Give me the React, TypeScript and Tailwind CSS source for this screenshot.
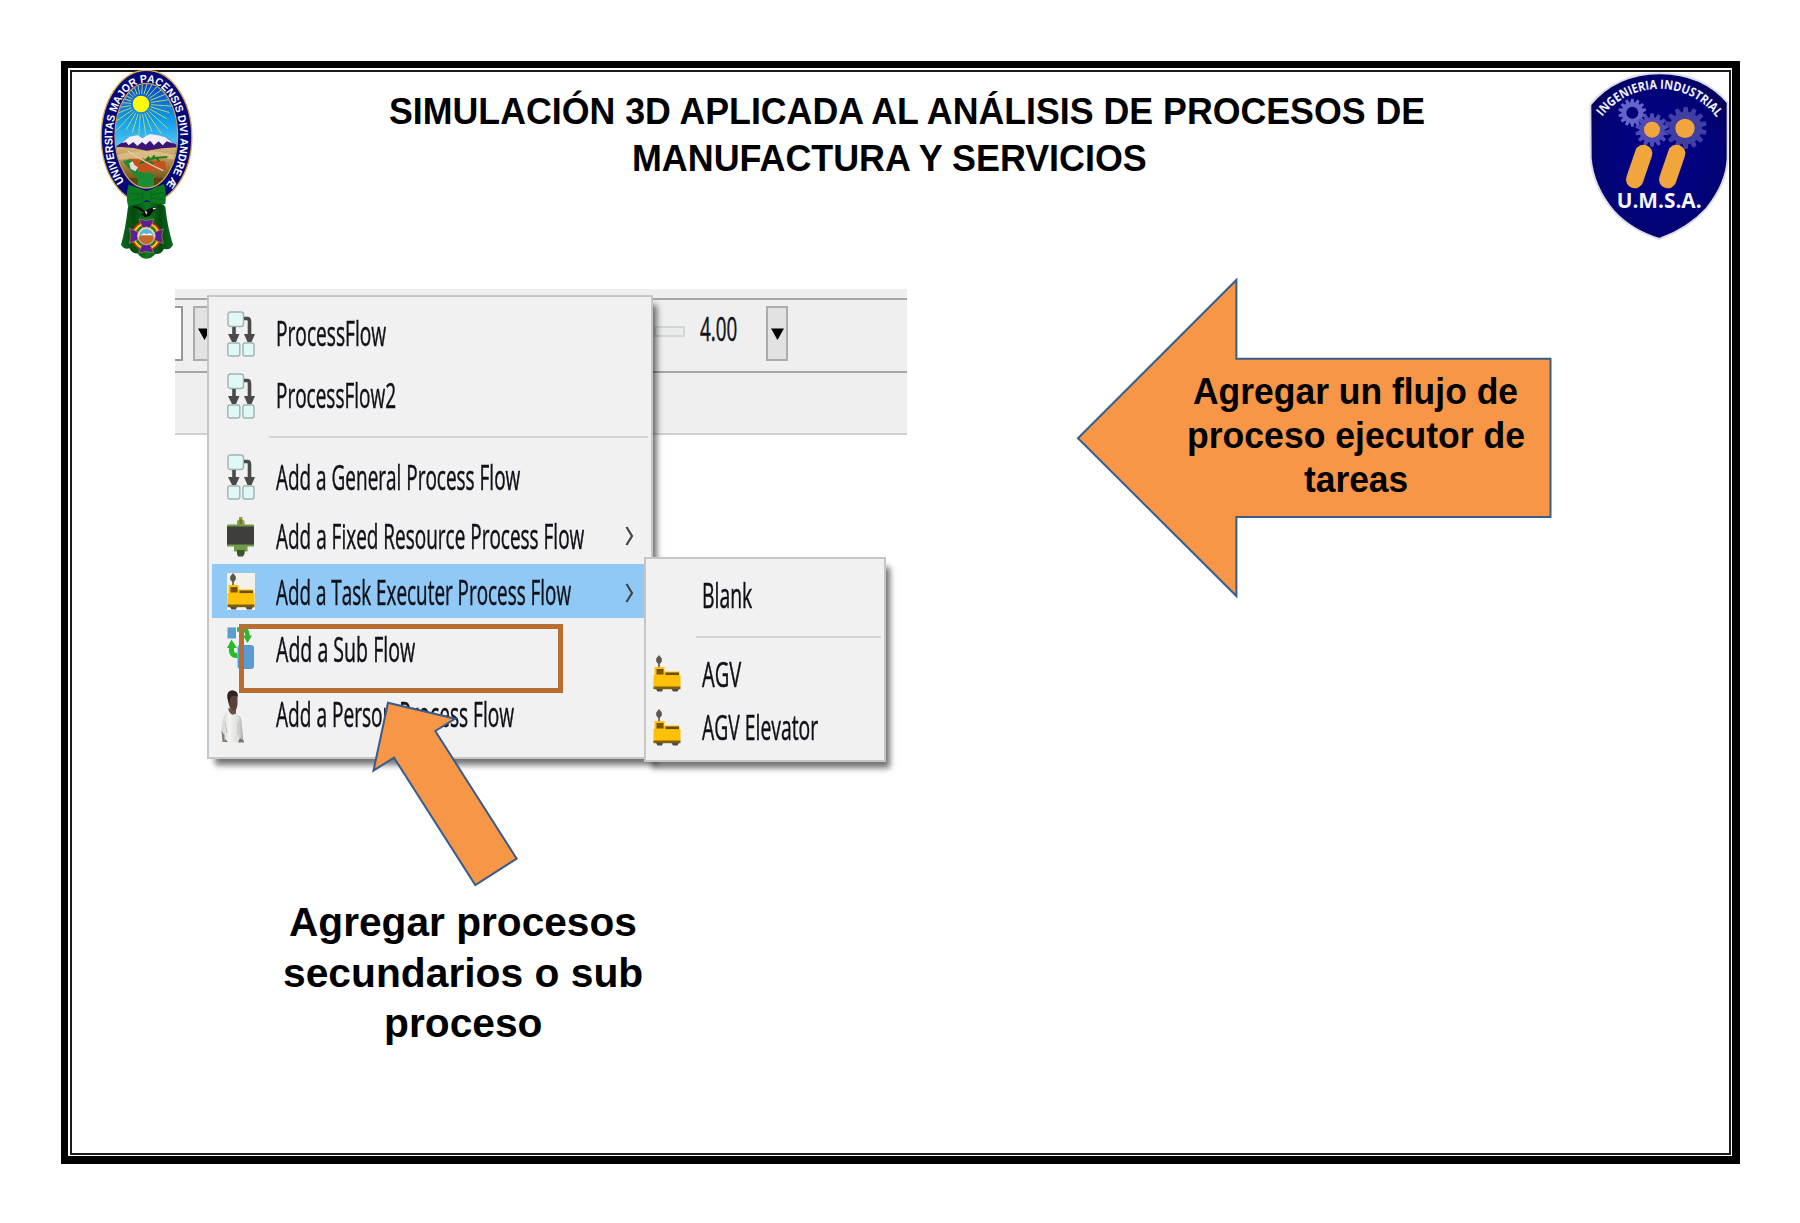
import { useLayoutEffect, useRef, useState } from "react";
import type { ReactNode } from "react";

/* One line of text, condensed or widened so that it spans `width` pixels. */
function FitLine({ width, className = "", children }: { width: number; className?: string; children: ReactNode }) {
  const ref = useRef<HTMLSpanElement>(null);
  const [scale, setScale] = useState(1);
  useLayoutEffect(() => {
    if (ref.current) setScale(width / ref.current.offsetWidth);
  }, [width]);
  return (
    <span className={`block ${className}`} style={{ width }}>
      <span ref={ref} className="inline-block origin-left whitespace-nowrap" style={{ transform: `scaleX(${scale})` }}>
        {children}
      </span>
    </span>
  );
}

const rayAngles = Array.from({ length: 28 }, (_, i) => (i * 360) / 28 + 4);

function UniversitySeal() {
  return (
    <svg className="-mt-[2px] ml-7 h-[191px] w-[94px] shrink-0" viewBox="150 60 282 573">
      <defs>
        <linearGradient id="sky" x1="0" y1="0" x2="0" y2="1">
          <stop offset="0" stopColor="#0a3fc4" />
          <stop offset="0.6" stopColor="#12a0ea" />
          <stop offset="1" stopColor="#5cc8f4" />
        </linearGradient>
        <linearGradient id="land" x1="0" y1="0" x2="0" y2="1">
          <stop offset="0" stopColor="#d8b878" />
          <stop offset="0.35" stopColor="#b08a48" />
          <stop offset="0.7" stopColor="#7a5a1c" />
          <stop offset="1" stopColor="#5a3c0c" />
        </linearGradient>
        <linearGradient id="ribbon" x1="0" y1="0" x2="1" y2="0">
          <stop offset="0" stopColor="#0b6a1c" />
          <stop offset="0.25" stopColor="#044a10" />
          <stop offset="0.5" stopColor="#0b7a20" />
          <stop offset="0.75" stopColor="#044a10" />
          <stop offset="1" stopColor="#0b6a1c" />
        </linearGradient>
        <clipPath id="sealInner">
          <ellipse cx="289" cy="257" rx="93" ry="156" />
        </clipPath>
        <path id="sealText" d="M223 395 A102 169 0 1 1 355 395" />
      </defs>
      <ellipse cx="289.5" cy="260" rx="136" ry="199" fill="#04087a" stroke="#d9a648" strokeWidth="4" />
      <g clipPath="url(#sealInner)">
        <rect x="190" y="95" width="200" height="200" fill="url(#sky)" />
        <g stroke="#b4dc74" strokeWidth="2.6">
          {rayAngles.map((a) => (
            <path key={a} d={a % 3 < 1.5 ? "M303 162 H382" : "M303 162 H362"} transform={`rotate(${a} 273 162)`} />
          ))}
        </g>
        <circle cx="273" cy="162" r="25" fill="#fdfb0a" />
        <path d="M190 295 L218 276 L238 262 L262 258 L276 264 L300 254 L322 258 L345 262 L366 276 L392 292 V306 H190Z" fill="#3b1478" />
        <path d="M214 280 L238 260 L262 256 L277 264 L300 252 L324 256 L346 262 L372 281 L350 274 L338 286 L326 274 L312 286 L300 272 L287 284 L276 276 L262 288 L250 276 L236 286 L228 276Z" fill="#f4effa" />
        <path d="M190 292 Q240 288 290 302 Q340 292 392 292 V420 H190Z" fill="url(#land)" />
        <path d="M200 315 Q290 290 384 318 V330 Q290 318 200 330Z" fill="#e2c892" opacity="0.7" />
        <path d="M235 326 L345 334 L350 358 L270 366Z" fill="#c4521c" />
        <path d="M218 334 L240 328 L268 366 L312 372 L312 412 L262 412 L264 388Z" fill="#1b8c34" />
        <path d="M270 340 Q310 318 352 322 M288 330 l10 -10 M304 328 l10 -12 M320 326 l8 8 M300 334 l10 8" stroke="#1f7a1d" strokeWidth="6" fill="none" />
        <path d="M234 303 Q290 340 340 362" stroke="#d8cfc0" strokeWidth="4" fill="none" />
        <path d="M238 340 l10 -6 l6 12 l10 6 l-8 12 l-14 -8z" fill="#e0ddd8" />
        <path d="M190 384 H262 V430 H190Z M312 384 H392 V430 H312Z" fill="#5e430e" />
      </g>
      <ellipse cx="289" cy="257" rx="94" ry="157" fill="none" stroke="#c9a060" strokeWidth="4" />
      <text fill="#fff" fontFamily="'Liberation Sans', sans-serif" fontWeight="700" fontSize="33" textLength="716" lengthAdjust="spacingAndGlyphs">
        <textPath href="#sealText">UNIVERSITAS MAJOR PACENSIS DIVI ANDRE Æ</textPath>
      </text>
      <path d="M246 456 L234 470 Q226 540 213 584 Q222 600 238 595 Q246 612 262 610 Q288 642 316 612 Q334 614 342 596 Q360 602 369 584 Q352 530 346 470 L332 456Z" fill="url(#ribbon)" />
      <path d="M236 404 Q262 412 290 424 Q318 410 342 402 Q350 430 346 462 Q320 466 290 450 Q262 466 234 468 Q226 434 236 404Z" fill="#0b7a20" />
      <path d="M240 430 L278 434 M242 452 L276 444 M342 428 L304 434 M342 450 L304 444 M278 424 V450 M303 424 V450" stroke="#066016" strokeWidth="2" />
      <path d="M248 470 Q270 468 285 484 Q300 470 326 472 Q308 482 300 498 L284 502 Q280 494 270 494 L282 488 Q266 476 248 470Z" fill="#0c0c0c" />
      <path d="M284 482 l8 4 -3 8z M308 474 l14 -1 -12 6z" fill="#eee" />
      <circle cx="289" cy="558" r="38" fill="none" stroke="#e02018" strokeWidth="14" />
      <circle cx="289" cy="558" r="37" fill="none" stroke="#f6d617" strokeWidth="6" />
      <circle cx="289" cy="558" r="32" fill="none" stroke="#188a28" strokeWidth="4" />
      {[0, 90, 180, 270].map((a) => (
        <path key={a} d="M279 536 L267 507 Q289 516 312 507 L300 536Z" transform={`rotate(${a} 289 558)`} fill="#5a1f98" stroke="#b88a40" strokeWidth="2" />
      ))}
      <circle cx="289" cy="558" r="27" fill="#e9d9b0" stroke="#b89858" strokeWidth="2" />
      <path d="M268 558 A21 21 0 0 1 310 558Z" fill="#54b8e0" />
      <path d="M266 560 Q289 546 312 560 A23 23 0 0 1 266 560Z" fill="#c06a30" />
      <path d="M272 556 l10 -6 8 3 10 -4 8 7z" fill="#fff" />
    </svg>
  );
}

function Gear({ cx, cy, r, teeth, fill }: { cx: number; cy: number; r: number; teeth: number; fill: string }) {
  const angles = Array.from({ length: teeth }, (_, i) => (i * 360) / teeth);
  const w = (r * 2.7) / teeth;
  return (
    <g fill={fill}>
      <circle cx={cx} cy={cy} r={r * 0.77} />
      {angles.map((a) => (
        <path
          key={a}
          d={`M${cx - w * 0.72} ${cy - r * 0.7} L${cx - w * 0.5} ${cy - r} H${cx + w * 0.5} L${cx + w * 0.72} ${cy - r * 0.7}Z`}
          transform={`rotate(${a} ${cx} ${cy})`}
        />
      ))}
    </g>
  );
}

function FacultyShield() {
  return (
    <svg className="h-[168px] w-[141px] shrink-0" viewBox="84 66 423 504">
      <defs>
        <radialGradient id="navy" cx="0.5" cy="0.5" r="0.6">
          <stop offset="0" stopColor="#02028c" />
          <stop offset="0.75" stopColor="#020275" />
          <stop offset="1" stopColor="#03034f" />
        </radialGradient>
        <path id="shieldText" d="M127 200 A216 216 0 0 1 474 208" />
      </defs>
      <path
        d="M91 164 Q168 71 300 70 Q428 71 503 158 V325 Q500 400 440 475 Q385 535 298 567 Q212 540 160 482 Q100 410 92 325Z"
        fill="url(#navy)"
        stroke="#dcdcec"
        strokeWidth="6"
      />
      <Gear cx={217} cy={188} r={42} teeth={14} fill="#6464cc" />
      <circle cx="217" cy="188" r="18" fill="#020276" />
      <Gear cx={276} cy={240} r={50} teeth={14} fill="#4f4bb4" />
      <Gear cx={377} cy={234} r={63} teeth={14} fill="#403ea2" />
      <g fill="#f0a63c">
        <circle cx="276" cy="239" r="24" />
        <circle cx="375" cy="235" r="29" />
      </g>
      <path d="M251 310 L224 389 M350 310 L323 389" stroke="#f0a63c" strokeWidth="52" strokeLinecap="round" />
      <text fill="#f4f4fc" fontFamily="'Open Sans', sans-serif" fontWeight="700" fontSize="38" textLength="396" lengthAdjust="spacingAndGlyphs">
        <textPath href="#shieldText">INGENIERIA INDUSTRIAL</textPath>
      </text>
      <text x="170" y="473" fill="#f4f4fc" fontFamily="'Open Sans', sans-serif" fontWeight="700" fontSize="66" textLength="255" lengthAdjust="spacingAndGlyphs">
        U.M.S.A.
      </text>
    </svg>
  );
}

function FlowIcon() {
  return (
    <svg className="ml-[15px] mt-[3px] h-[46px] w-[28px]" viewBox="0 0 28 46">
      <g fill="#e2f8f6" stroke="#9fb4b2" strokeWidth="1.4">
        <rect x="1" y="1" width="15.5" height="14.5" rx="2.5" />
        <rect x="0.8" y="32" width="12" height="13" rx="2" />
        <rect x="16" y="32" width="11" height="13" rx="2" />
      </g>
      <path d="M7 16 V26 M17 7.500 H20.5 Q22.500 7.500 22.500 11 V26" fill="none" stroke="#4a4a4a" strokeWidth="3.6" />
      <path d="M1 23 H12.500 L9 31 H5Z M17 23 H28 L24.500 31 H20.500Z" fill="#4a4a4a" />
    </svg>
  );
}

function FixedResourceIcon() {
  return (
    <svg className="ml-[15px] mt-1 h-[41px] w-[28px]" viewBox="0 0 28 41">
      <path d="M10 9 V5 L12 3.500 V1 H15.500 V3.500 L17.500 5 V9Z" fill="#8ea040" />
      <rect x="12.500" y="3.500" width="2.500" height="4.500" fill="#8a6a2c" />
      <rect x="0" y="8.500" width="27" height="3" rx="1" fill="#6f9a44" />
      <rect x="0" y="10.500" width="27" height="18.500" fill="#3e3e3c" />
      <path d="M0 28.500 H27 V30.500 H20.500 V35.500 H17.500 V37 H10 V35.500 H7 V30.500 H0Z" fill="#6f9a4a" />
      <path d="M10 34 H17.500 V38 L16 40.500 H11 L10 38Z" fill="#3c5230" />
    </svg>
  );
}

function AgvIcon({ className = "" }: { className?: string }) {
  return (
    <svg className={`h-[37px] w-[28px] ${className}`} viewBox="0 0 28 37">
      <path d="M6 0 L8.800 3.500 V6.500 L6.800 9 V12 H5.200 V9 L3.200 6.500 V3.500Z" fill="#5c5850" />
      <path d="M1.500 12 H11.500 V16.500 H26.500 V20 H27.500 V32 H0.500 V20 H1.500Z" fill="#ffc107" />
      <rect x="3.500" y="14" width="7" height="5.500" fill="#7a5200" />
      <rect x="12.500" y="17.500" width="13.500" height="2.600" fill="#6a5010" />
      <rect x="0.500" y="31.500" width="27" height="2.700" fill="#7c6008" />
      <path d="M3 34 H10 L9 36.500 H4.500Z M18.500 34 H26 L24.500 36.500 H20Z" fill="#4c4c4c" />
    </svg>
  );
}

function SubFlowIcon() {
  return (
    <svg className="ml-[15px] mt-[3px] h-[43px] w-[28px]" viewBox="0 0 28 43">
      <path d="M10 2.500 H16 Q20.500 2.500 20.500 9" fill="none" stroke="#2fb52c" strokeWidth="4.5" />
      <path d="M16 8.500 H25 L20.500 16Z" fill="#2fb52c" />
      <path d="M4.500 19 V24 Q5 29 10.500 28.500" fill="none" stroke="#27bd25" strokeWidth="5" />
      <path d="M0 21 L4.500 12.500 L10 21Z" fill="#27bd25" />
      <rect x="0.500" y="0.500" width="8.500" height="11" fill="#5b9bd0" />
      <rect x="10.500" y="18" width="16.500" height="24" rx="3" fill="#5b9bd5" />
    </svg>
  );
}

function PersonIcon() {
  return (
    <svg className="ml-[9px] mt-[9px] h-[53px] w-[24px]" viewBox="0 0 24 53">
      <defs>
        <linearGradient id="shirt" x1="0" y1="0" x2="1" y2="0">
          <stop offset="0" stopColor="#cfcfcd" />
          <stop offset="0.35" stopColor="#f4f4f2" />
          <stop offset="0.75" stopColor="#dededc" />
          <stop offset="1" stopColor="#a4a4a2" />
        </linearGradient>
      </defs>
      <path d="M7.500 18 L15 20 L15 25 Q12 29 7 24Z" fill="#6b5248" />
      <path d="M6.500 6 Q6.500 0.500 11.500 0.500 Q16.500 0.500 16.500 8 V14 Q16 20.500 13 21 Q9 20 8 15 Q6.500 10 6.500 6Z" fill="#5a4238" />
      <path d="M6.500 8 Q5.500 0.500 11.500 0.500 Q17.500 0.500 16.800 7 Q15 5 11 6 Q8.500 8 8 14Z" fill="#2a2422" />
      <path d="M2 29 Q4 22 7.500 20 Q10 27 15 23.500 Q20 25 20.500 31 L22.500 52 H2 L0.500 40Z" fill="url(#shirt)" />
      <path d="M4 33 L6 43 M17 32 L17 45" fill="none" stroke="#b4b4b2" strokeWidth="0.8" />
      <path d="M0.500 41 L3.500 45 V52 H1.500Z" fill="#8a7a72" />
      <path d="M4 49 L7 52 H3Z M19 48 L23 51 V52.500 H17Z" fill="#7c7672" />
    </svg>
  );
}

function Chevron() {
  return (
    <svg className="absolute left-[413px] top-1/2 -mt-[8px] h-[20px] w-[9px]" viewBox="0 0 9 20">
      <path d="M1.500 1 L7 10 L1.500 19" fill="none" stroke="#444" strokeWidth="2.2" />
    </svg>
  );
}

function MenuRow({
  icon,
  label,
  width,
  className,
  labelClass = "mt-[3px]",
  arrow = false,
}: {
  icon: ReactNode;
  label: string;
  width: number;
  className: string;
  labelClass?: string;
  arrow?: boolean;
}) {
  return (
    <div className={`relative ml-[3px] flex w-[432px] items-center ${className}`}>
      <div className="flex h-full w-[64px] shrink-0 items-center">{icon}</div>
      <FitLine width={width} className={labelClass}>
        {label}
      </FitLine>
      {arrow && <Chevron />}
    </div>
  );
}

function SubmenuRow({ label, width, className, icon }: { label: string; width: number; className: string; icon?: ReactNode }) {
  return (
    <div className={`flex items-center ${className}`}>
      <div className="flex w-[56px] shrink-0 items-center">{icon}</div>
      <FitLine width={width} className="mt-[3px]">
        {label}
      </FitLine>
    </div>
  );
}

function DropButton({ className }: { className: string }) {
  return (
    <div className={`flex h-[55px] w-[22px] shrink-0 items-center justify-center border-2 border-[#acacac] bg-[#e2e2e2] ${className}`}>
      <svg className="h-[12px] w-[13px]" viewBox="0 0 13 12">
        <path d="M0 0.500 H13 L6.500 12Z" fill="#000" />
      </svg>
    </div>
  );
}

function ProgramCapture() {
  return (
    <div className="relative ml-[103px] h-[479px] w-[732px] shrink-0 font-['Open_Sans',sans-serif] text-[34.500px] font-medium leading-none text-[#101018]">
      <div className="blur-[0.6px] [-webkit-text-stroke:0.5px_#101018]">
        <div className="h-[146px] border-b-2 border-[#d0d0d0] bg-[#efefef] pt-[9px]">
          <div className="flex h-[75px] items-start border-y-2 border-[#a6a6a6] pt-[6px]">
            <div className="h-[55px] w-[8px] shrink-0 border-2 border-l-0 border-[#999] bg-white" />
            <DropButton className="ml-[10px]" />
            <div className="ml-[439px] mt-[20px] h-[11px] w-[31px] shrink-0 border-2 border-[#d2d6d6] bg-[#e9eceb]" />
            <FitLine width={37} className="ml-[15px] mt-[7px] text-[32px]">
              4.00
            </FitLine>
            <DropButton className="ml-[29px]" />
          </div>
        </div>

        <div className="absolute left-[32px] top-[6px] h-[464px] w-[446px] border-2 border-[#c6c6c6] bg-[#f1f1f1] pt-1 shadow-[6px_8px_6px_-2px_rgba(0,0,0,0.55)]">
          <MenuRow icon={<FlowIcon />} label="ProcessFlow" width={110} className="h-[62px]" />
          <MenuRow icon={<FlowIcon />} label="ProcessFlow2" width={120} className="h-[62px]" />
          <div className="ml-[60px] flex h-[22px] w-[379px] items-center pt-px">
            <div className="h-[2px] w-full bg-[#d6d6d6]" />
          </div>
          <MenuRow icon={<FlowIcon />} label="Add a General Process Flow" width={244} className="h-[57px]" labelClass="mt-1" />
          <MenuRow icon={<FixedResourceIcon />} label="Add a Fixed Resource Process Flow" width={308} className="h-[60px]" labelClass="mt-1" arrow />
          <MenuRow
            icon={<AgvIcon className="ml-[15px] bg-[#f4f1ea]" />}
            label="Add a Task Executer Process Flow"
            width={295}
            className="h-[54px] bg-[#90c8f6]"
            labelClass="mt-[2px]"
            arrow
          />
          <MenuRow icon={<SubFlowIcon />} label="Add a Sub Flow" width={139} className="h-[57px]" labelClass="mt-[6px]" />
          <MenuRow icon={<PersonIcon />} label="Add a Person Process Flow" width={238} className="h-[73px]" labelClass="mt-[6px]" />
        </div>

        <div className="absolute left-[469px] top-[268px] h-[205px] w-[242px] border-2 border-[#c6c6c6] bg-[#f1f1f1] pt-1 shadow-[6px_8px_6px_-2px_rgba(0,0,0,0.55)]">
          <SubmenuRow label="Blank" width={50} className="h-[62px]" />
          <div className="ml-[50px] flex h-[24px] w-[185px] items-center">
            <div className="h-[2px] w-full bg-[#d6d6d6]" />
          </div>
          <SubmenuRow label="AGV" width={39} className="h-[47px]" icon={<AgvIcon className="ml-[7px] mt-[2px]" />} />
          <SubmenuRow label="AGV Elevator" width={116} className="h-[60px]" icon={<AgvIcon className="ml-[7px] mt-[3px]" />} />
        </div>
      </div>

      <div className="absolute left-[64px] top-[335px] h-[69px] w-[324px] border-[5.500px] border-[#b86e32]" />
      <svg className="absolute left-[190px] top-[405px] h-[200px] w-[160px]" viewBox="365 694 160 200">
        <path
          d="M388 702.700 L455.300 718.700 L435.300 731 L516.700 858.700 L475.300 885 L394 757.700 L373.500 770.700Z"
          fill="#f79646"
          stroke="#385d8a"
          strokeWidth="2"
        />
      </svg>
    </div>
  );
}

function TaskArrow() {
  return (
    <div className="relative ml-[163px] -mt-[16px] h-[330px] w-[490px] shrink-0">
      <svg className="absolute inset-0 h-full w-full" viewBox="1070 273 490 330">
        <path
          d="M1078 438.300 L1236.400 280 V358.700 H1550.500 V517 H1236.400 V596Z"
          fill="#f79646"
          stroke="#385d8a"
          strokeWidth="2"
        />
      </svg>
      <div className="relative flex flex-col items-center pl-[81px] pt-[97px] text-[36px] font-bold leading-[44px]">
        <FitLine width={325}>Agregar un flujo de</FitLine>
        <FitLine width={338}>proceso ejecutor de</FitLine>
        <FitLine width={104}>tareas</FitLine>
      </div>
    </div>
  );
}

export default function App() {
  return (
    <div className="flex h-[1223px] w-[1800px] items-start bg-white pl-[61px] pt-[61px] font-['Liberation_Sans',sans-serif] text-black">
      <div className="h-[1103px] w-[1679px] border-b-8 border-l-[7px] border-r-8 border-t-[7px] border-black pb-px pl-[2px] pr-px pt-[2px]">
        <main className="h-full border-2 border-[#1c1c1c]">
          <header className="flex h-[217px] items-start">
            <UniversitySeal />
            <h1 className="ml-[194px] mt-[16px] flex w-[1037px] flex-col items-center text-[36px] font-bold leading-[47px]">
              <FitLine width={1036}>SIMULACIÓN 3D APLICADA AL ANÁLISIS DE PROCESOS DE</FitLine>
              <FitLine width={515} className="mr-[34px]">
                MANUFACTURA Y SERVICIOS
              </FitLine>
            </h1>
            <div className="ml-[163px]">
              <FacultyShield />
            </div>
          </header>
          <section className="flex items-start">
            <ProgramCapture />
            <TaskArrow />
          </section>
          <div className="ml-[209px] mt-[129px] flex w-[364px] flex-col items-center text-[41px] font-bold leading-[50.500px]">
            <FitLine width={348}>Agregar procesos</FitLine>
            <FitLine width={360}>secundarios o sub</FitLine>
            <FitLine width={159}>proceso</FitLine>
          </div>
        </main>
      </div>
    </div>
  );
}
